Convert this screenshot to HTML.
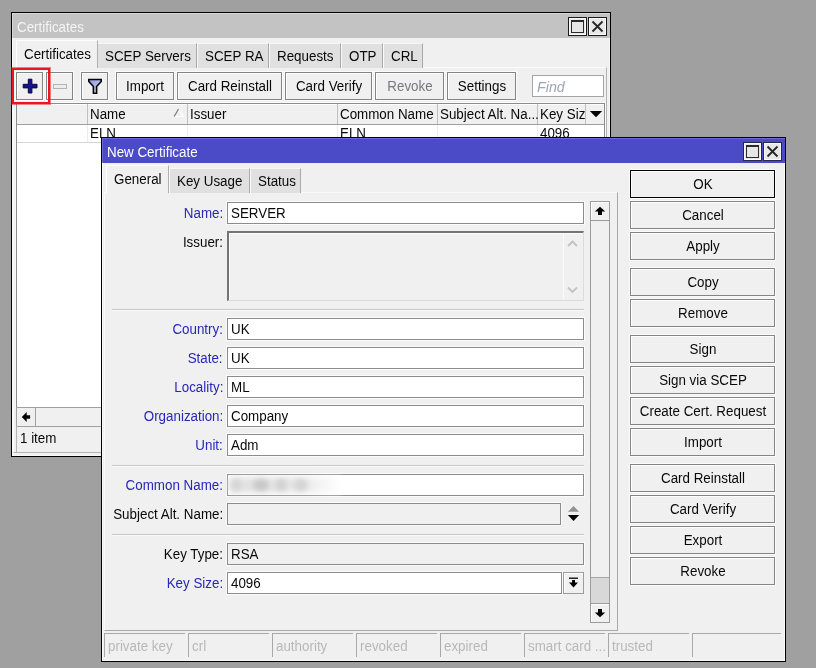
<!DOCTYPE html>
<html><head><meta charset="utf-8">
<style>
*{box-sizing:border-box;margin:0;padding:0}
html,body{width:816px;height:668px;overflow:hidden;background:#a0a0a0;font-family:"Liberation Sans",sans-serif;font-size:14px;color:#080808}
.a{position:absolute}
.t{position:absolute;white-space:nowrap;line-height:16px;display:block;transform:scaleX(0.955);transform-origin:0 0}
.tr{transform-origin:100% 0}
.tc{text-align:center;transform-origin:50% 0}
</style></head><body>
<div class="a" style="left:11px;top:12px;width:600px;height:445px;border:1px solid #000;background:#f0f0f0"></div>
<div class="a" style="left:12px;top:13px;width:598px;height:443px;border:1px solid #fafafa;border-right-color:#f8f8f8;border-bottom-color:#f8f8f8"></div>
<div class="a" style="left:12px;top:13px;width:598px;height:25px;background:#c3c3c3;border-top:1px solid #d8d8d8;border-left:1px solid #d8d8d8"></div>
<span class="t" style="left:17px;top:19px;color:#f4f4f4;">Certificates</span>
<div class="a" style="left:568px;top:17px;width:19px;height:19px;border:1px solid #1a1a1a;background:#fafafa"></div>
<div class="a" style="left:570px;top:19px;width:15px;height:15px;background:#e8e8e8"></div>
<div class="a" style="left:571px;top:20px;width:13px;height:13px;border:1px solid #2a2a2a;border-top-width:2px;background:#e6e6e6"></div>
<div class="a" style="left:588px;top:17px;width:19px;height:19px;border:1px solid #1a1a1a;background:#fafafa"></div>
<div class="a" style="left:590px;top:19px;width:15px;height:15px;background:#e8e8e8"></div>
<svg class="a" style="left:588px;top:17px" width="19" height="19"><path d="M4.5 4.5L14.5 14.5M14.5 4.5L4.5 14.5" stroke="#262626" stroke-width="1.8"/></svg>
<div class="a" style="left:13px;top:67px;width:594px;height:386px;border:1px solid #fafafa;border-right-color:#b4b4b4;border-bottom-color:#b4b4b4"></div>
<div class="a" style="left:97px;top:43px;width:100px;height:25px;background:#e0e0e0;border-top:1px solid #f6f6f6;border-left:1px solid #fafafa;border-right:1px solid #a8a8a8"></div>
<span class="t" style="left:104.5px;top:48px;">SCEP Servers</span>
<div class="a" style="left:197px;top:43px;width:72px;height:25px;background:#e0e0e0;border-top:1px solid #f6f6f6;border-left:1px solid #fafafa;border-right:1px solid #a8a8a8"></div>
<span class="t" style="left:204.5px;top:48px;">SCEP RA</span>
<div class="a" style="left:269px;top:43px;width:72px;height:25px;background:#e0e0e0;border-top:1px solid #f6f6f6;border-left:1px solid #fafafa;border-right:1px solid #a8a8a8"></div>
<span class="t" style="left:276.5px;top:48px;">Requests</span>
<div class="a" style="left:341px;top:43px;width:42px;height:25px;background:#e0e0e0;border-top:1px solid #f6f6f6;border-left:1px solid #fafafa;border-right:1px solid #a8a8a8"></div>
<span class="t" style="left:348.5px;top:48px;">OTP</span>
<div class="a" style="left:383px;top:43px;width:40px;height:25px;background:#e0e0e0;border-top:1px solid #f6f6f6;border-left:1px solid #fafafa;border-right:1px solid #a8a8a8"></div>
<span class="t" style="left:390.5px;top:48px;">CRL</span>
<div class="a" style="left:16px;top:40px;width:82px;height:28px;background:#f0f0f0;border-top:1px solid #fdfdfd;border-left:1px solid #fdfdfd;border-right:1px solid #b0b0b0"></div>
<span class="t" style="left:24px;top:46px;">Certificates</span>
<div class="a" style="left:16px;top:72px;width:27px;height:28px;border:1px solid #848484;background:#f0f0f0;box-shadow:0 0 0 1px #fbfbfb,inset 1px 1px 0 #fff"></div>
<svg class="a" style="left:22px;top:78px" width="17" height="17"><path d="M6.3 1.2h3.6v5.1h5.1v3.6h-5.1v5.1h-3.6v-5.1h-5.1v-3.6h5.1z" fill="#14148c" stroke="#080840" stroke-width="1"/></svg>
<div class="a" style="left:46px;top:72px;width:27px;height:28px;border:1px solid #848484;background:#f0f0f0;box-shadow:0 0 0 1px #fbfbfb,inset 1px 1px 0 #fff"></div>
<div class="a" style="left:53px;top:84px;width:14px;height:5px;border:1px solid #b4b4b4;background:#ececec"></div>
<div class="a" style="left:81px;top:72px;width:27px;height:28px;border:1px solid #848484;background:#f0f0f0;box-shadow:0 0 0 1px #fbfbfb,inset 1px 1px 0 #fff"></div>
<svg class="a" style="left:87px;top:78px" width="16" height="17"><defs><linearGradient id="fg" x1="0" y1="0" x2="1" y2="1"><stop offset="0" stop-color="#8c94d8"/><stop offset="1" stop-color="#d8dcf4"/></linearGradient></defs><path d="M1.8 1.5h12.4v2l-4.6 5v6.7h-3.2v-6.7l-4.6-5z" fill="url(#fg)" stroke="#050505" stroke-width="1.6" stroke-linejoin="miter"/></svg>
<div class="a" style="left:116px;top:72px;width:58px;height:28px;border:1px solid #848484;background:#f0f0f0;box-shadow:0 0 0 1px #fbfbfb,inset 1px 1px 0 #fff"></div>
<span class="t tc" style="left:-5.0px;width:300px;top:78px;">Import</span>
<div class="a" style="left:177px;top:72px;width:105px;height:28px;border:1px solid #848484;background:#f0f0f0;box-shadow:0 0 0 1px #fbfbfb,inset 1px 1px 0 #fff"></div>
<span class="t tc" style="left:79.5px;width:300px;top:78px;">Card Reinstall</span>
<div class="a" style="left:285px;top:72px;width:87px;height:28px;border:1px solid #848484;background:#f0f0f0;box-shadow:0 0 0 1px #fbfbfb,inset 1px 1px 0 #fff"></div>
<span class="t tc" style="left:178.5px;width:300px;top:78px;">Card Verify</span>
<div class="a" style="left:375px;top:72px;width:69px;height:28px;border:1px solid #848484;background:#f0f0f0;box-shadow:0 0 0 1px #fbfbfb,inset 1px 1px 0 #fff"></div>
<span class="t tc" style="left:259.5px;width:300px;top:78px;color:#78787c;">Revoke</span>
<div class="a" style="left:447px;top:72px;width:69px;height:28px;border:1px solid #848484;background:#f0f0f0;box-shadow:0 0 0 1px #fbfbfb,inset 1px 1px 0 #fff"></div>
<span class="t tc" style="left:331.5px;width:300px;top:78px;">Settings</span>
<div class="a" style="left:532px;top:75px;width:72px;height:22px;border:1px solid #a5a5a5;background:#fff"></div>
<span class="t" style="left:537px;top:79px;color:#9ea4b4;font-style:italic;transform:scaleX(1.02)">Find</span>
<div class="a" style="left:16px;top:103px;width:589px;height:305px;background:#fff;border:1px solid #8c8c8c;box-shadow:0 0 0 1px #fbfbfb"></div>
<div class="a" style="left:17px;top:104px;width:587px;height:21px;background:#f0f0f0;border-bottom:1px solid #a0a0a0;border-top:1px solid #fff"></div>
<div class="a" style="left:87px;top:104px;width:1px;height:20px;background:#c0c0c0"></div>
<div class="a" style="left:187px;top:104px;width:1px;height:20px;background:#c0c0c0"></div>
<div class="a" style="left:337px;top:104px;width:1px;height:20px;background:#c0c0c0"></div>
<div class="a" style="left:437px;top:104px;width:1px;height:20px;background:#c0c0c0"></div>
<div class="a" style="left:537px;top:104px;width:1px;height:20px;background:#c0c0c0"></div>
<div class="a" style="left:585px;top:104px;width:1px;height:20px;background:#c0c0c0"></div>
<span class="t" style="left:90px;top:106px;">Name</span>
<svg class="a" style="left:172px;top:107px" width="14" height="12"><path d="M6.5 2L11.5 9.5H2" fill="none" stroke="#fff" stroke-width="1.2"/><path d="M6.5 2L2.2 9.5" fill="none" stroke="#7a7a7a" stroke-width="1.2"/></svg>
<span class="t" style="left:190px;top:106px;">Issuer</span>
<span class="t" style="left:340px;top:106px;">Common Name</span>
<span class="t" style="left:440px;top:106px;">Subject Alt. Na...</span>
<span class="t" style="left:540px;top:106px;">Key Siz</span>
<svg class="a" style="left:589px;top:110px" width="15" height="10"><path d="M0.8 1H13.2L7 7.3Z" fill="#000"/></svg>
<div class="a" style="left:17px;top:142px;width:587px;height:1px;background:#d4d4d4"></div>
<div class="a" style="left:87px;top:125px;width:1px;height:17px;background:#ececec"></div>
<div class="a" style="left:187px;top:125px;width:1px;height:17px;background:#ececec"></div>
<div class="a" style="left:337px;top:125px;width:1px;height:17px;background:#ececec"></div>
<div class="a" style="left:437px;top:125px;width:1px;height:17px;background:#ececec"></div>
<div class="a" style="left:537px;top:125px;width:1px;height:17px;background:#ececec"></div>
<span class="t" style="left:90px;top:125px;">ELN</span>
<span class="t" style="left:340px;top:125px;">ELN</span>
<span class="t" style="left:540px;top:125px;">4096</span>
<div class="a" style="left:16px;top:407px;width:589px;height:20px;background:#f0f0f0;border:1px solid #a0a0a0"></div>
<div class="a" style="left:17px;top:408px;width:19px;height:18px;background:#f0f0f0;border-right:1px solid #a0a0a0"></div>
<svg class="a" style="left:18px;top:409px" width="16" height="16"><path d="M3.8 8L8.7 3V6.2H12.1V9.7H8.7V13Z" fill="#000"/></svg>
<div class="a" style="left:16px;top:426px;width:589px;height:27px;border-left:1px solid #b4b4b4;border-bottom:1px solid #b4b4b4"></div>
<span class="t" style="left:20px;top:430px;">1 item</span>
<div class="a" style="left:101px;top:137px;width:685px;height:525px;border:1px solid #000;background:#f0f0f0"></div>
<div class="a" style="left:102px;top:138px;width:683px;height:523px;border:1px solid #fafafa"></div>
<div class="a" style="left:102px;top:138px;width:683px;height:25px;background:#4b4bc8;border-top:1px solid #6a6ad8;border-left:1px solid #6a6ad8"></div>
<span class="t" style="left:107px;top:144px;color:#fff;">New Certificate</span>
<div class="a" style="left:743px;top:142px;width:19px;height:19px;border:1px solid #262650;background:#fafafa"></div>
<div class="a" style="left:745px;top:144px;width:15px;height:15px;background:#e8e8e8"></div>
<div class="a" style="left:746px;top:145px;width:13px;height:13px;border:1px solid #2a2a2a;border-top-width:2px;background:#e6e6e6"></div>
<div class="a" style="left:763px;top:142px;width:19px;height:19px;border:1px solid #262650;background:#fafafa"></div>
<div class="a" style="left:765px;top:144px;width:15px;height:15px;background:#e8e8e8"></div>
<svg class="a" style="left:763px;top:142px" width="19" height="19"><path d="M4.5 4.5L14.5 14.5M14.5 4.5L4.5 14.5" stroke="#262626" stroke-width="1.8"/></svg>
<div class="a" style="left:104px;top:192px;width:514px;height:439px;border:1px solid #fafafa;border-right-color:#a8a8a8;border-bottom-color:#a8a8a8"></div>
<div class="a" style="left:169px;top:168px;width:81px;height:25px;background:#e0e0e0;border-top:1px solid #f6f6f6;border-left:1px solid #fafafa;border-right:1px solid #a8a8a8"></div>
<span class="t" style="left:176.5px;top:173px;">Key Usage</span>
<div class="a" style="left:250px;top:168px;width:51px;height:25px;background:#e0e0e0;border-top:1px solid #f6f6f6;border-left:1px solid #fafafa;border-right:1px solid #a8a8a8"></div>
<span class="t" style="left:257.5px;top:173px;">Status</span>
<div class="a" style="left:106px;top:165px;width:63px;height:28px;background:#f0f0f0;border-top:1px solid #fdfdfd;border-left:1px solid #fdfdfd;border-right:1px solid #b0b0b0"></div>
<span class="t" style="left:114px;top:171px;">General</span>
<span class="t tr" style="right:593px;top:205px;color:#2727b8;">Name:</span>
<div class="a" style="left:227px;top:202px;width:357px;height:22px;border:1px solid #8c8c8c;background:#fff;box-shadow:0 0 0 1px #fbfbfb"></div>
<span class="t" style="left:231px;top:205px;">SERVER</span>
<span class="t tr" style="right:593px;top:234px;">Issuer:</span>
<div class="a" style="left:227px;top:231px;width:357px;height:70px;background:#f0f0f0;border:2px solid #747474;border-right:1px solid #dcdcdc;border-bottom:1px solid #dcdcdc;box-shadow:inset 1px 1px 0 #fcfcfc"></div>
<div class="a" style="left:563px;top:233px;width:1px;height:67px;background:#fafafa"></div>
<svg class="a" style="left:564px;top:236px" width="18" height="60"><path d="M4 10L8.5 5.6L13 10M4 51.5L8.5 55.9L13 51.5" fill="none" stroke="#c2c2c2" stroke-width="1.9"/></svg>
<div class="a" style="left:112px;top:309px;width:472px;height:1px;background:#c8c8c8"></div>
<div class="a" style="left:112px;top:310px;width:472px;height:1px;background:#fafafa"></div>
<span class="t tr" style="right:593px;top:321px;color:#2727b8;">Country:</span>
<div class="a" style="left:227px;top:318px;width:357px;height:22px;border:1px solid #8c8c8c;background:#fff;box-shadow:0 0 0 1px #fbfbfb"></div>
<span class="t" style="left:231px;top:321px;">UK</span>
<span class="t tr" style="right:593px;top:350px;color:#2727b8;">State:</span>
<div class="a" style="left:227px;top:347px;width:357px;height:22px;border:1px solid #8c8c8c;background:#fff;box-shadow:0 0 0 1px #fbfbfb"></div>
<span class="t" style="left:231px;top:350px;">UK</span>
<span class="t tr" style="right:593px;top:379px;color:#2727b8;">Locality:</span>
<div class="a" style="left:227px;top:376px;width:357px;height:22px;border:1px solid #8c8c8c;background:#fff;box-shadow:0 0 0 1px #fbfbfb"></div>
<span class="t" style="left:231px;top:379px;">ML</span>
<span class="t tr" style="right:593px;top:408px;color:#2727b8;">Organization:</span>
<div class="a" style="left:227px;top:405px;width:357px;height:22px;border:1px solid #8c8c8c;background:#fff;box-shadow:0 0 0 1px #fbfbfb"></div>
<span class="t" style="left:231px;top:408px;">Company</span>
<span class="t tr" style="right:593px;top:437px;color:#2727b8;">Unit:</span>
<div class="a" style="left:227px;top:434px;width:357px;height:22px;border:1px solid #8c8c8c;background:#fff;box-shadow:0 0 0 1px #fbfbfb"></div>
<span class="t" style="left:231px;top:437px;">Adm</span>
<div class="a" style="left:112px;top:465px;width:472px;height:1px;background:#c8c8c8"></div>
<div class="a" style="left:112px;top:466px;width:472px;height:1px;background:#fafafa"></div>
<span class="t tr" style="right:593px;top:477px;color:#2727b8;">Common Name:</span>
<div class="a" style="left:227px;top:474px;width:357px;height:22px;border:1px solid #8c8c8c;background:#fff;box-shadow:0 0 0 1px #fbfbfb"></div>
<div class="a" style="left:229px;top:477px;width:112px;height:16px;filter:blur(3px);background:linear-gradient(90deg,#e2e2e2,#e6e6e6 60%,#fff)"></div>
<div class="a" style="left:231px;top:479px;width:11px;height:12px;border-radius:50%;filter:blur(2.5px);background:#d6d6d6"></div>
<div class="a" style="left:253px;top:479px;width:16px;height:12px;border-radius:50%;filter:blur(2.5px);background:#c8c8c8"></div>
<div class="a" style="left:275px;top:479px;width:12px;height:12px;border-radius:50%;filter:blur(2.5px);background:#d2d2d2"></div>
<div class="a" style="left:294px;top:479px;width:14px;height:12px;border-radius:50%;filter:blur(2.5px);background:#d4d4d4"></div>
<span class="t tr" style="right:593px;top:506px;">Subject Alt. Name:</span>
<div class="a" style="left:227px;top:503px;width:334px;height:22px;border:1px solid #8c8c8c;background:#f0f0f0;box-shadow:0 0 0 1px #fbfbfb"></div>
<svg class="a" style="left:565px;top:505px" width="16" height="18"><path d="M3 6.7L8.5 0.9L14 6.7Z" fill="#929292"/><path d="M2.9 9.9H14.1L8.5 15.9Z" fill="#000"/></svg>
<div class="a" style="left:112px;top:534px;width:472px;height:1px;background:#c8c8c8"></div>
<div class="a" style="left:112px;top:535px;width:472px;height:1px;background:#fafafa"></div>
<span class="t tr" style="right:593px;top:546px;">Key Type:</span>
<div class="a" style="left:227px;top:543px;width:357px;height:22px;border:1px solid #8c8c8c;background:#f0f0f0;box-shadow:0 0 0 1px #fbfbfb"></div>
<span class="t" style="left:231px;top:546px;">RSA</span>
<span class="t tr" style="right:593px;top:575px;color:#2727b8;">Key Size:</span>
<div class="a" style="left:227px;top:572px;width:335px;height:22px;border:1px solid #8c8c8c;background:#fff;box-shadow:0 0 0 1px #fbfbfb"></div>
<span class="t" style="left:231px;top:575px;">4096</span>
<div class="a" style="left:563px;top:572px;width:21px;height:22px;border:1px solid #9c9c9c;background:#f0f0f0;box-shadow:inset 1px 1px 0 #fff"></div>
<svg class="a" style="left:565px;top:574px" width="16" height="16"><path d="M4 4.2h9" stroke="#000" stroke-width="1.3"/><path d="M7.2 6h2.8v2.6h3l-4.5 5-4.5-5h3z" fill="#000"/></svg>
<div class="a" style="left:590px;top:201px;width:20px;height:422px;background:#f0f0f0;border:1px solid #9c9c9c"></div>
<div class="a" style="left:590px;top:201px;width:20px;height:20px;border:1px solid #9c9c9c;background:#f0f0f0;box-shadow:inset 1px 1px 0 #fff"></div>
<svg class="a" style="left:592px;top:203px" width="16" height="16"><path d="M8 3.8L13.2 8.6H10V12H6V8.6H2.8Z" fill="#000"/></svg>
<div class="a" style="left:591px;top:577px;width:18px;height:26px;background:#d8d8d8;border-top:1px solid #a8a8a8"></div>
<div class="a" style="left:590px;top:603px;width:20px;height:20px;border:1px solid #9c9c9c;background:#f0f0f0;box-shadow:inset 1px 1px 0 #fff"></div>
<svg class="a" style="left:592px;top:605px" width="16" height="16"><path d="M8 12.2L13.2 7.4H10V4H6V7.4H2.8Z" fill="#000"/></svg>
<div class="a" style="left:630px;top:170px;width:145px;height:28px;border:1px solid #000;background:#f0f0f0;box-shadow:0 0 0 1px #fbfbfb,inset 1px 1px 0 #fff"></div>
<span class="t tc" style="left:552.5px;width:300px;top:176px;">OK</span>
<div class="a" style="left:630px;top:201px;width:145px;height:28px;border:1px solid #848484;background:#f0f0f0;box-shadow:0 0 0 1px #fbfbfb,inset 1px 1px 0 #fff"></div>
<span class="t tc" style="left:552.5px;width:300px;top:207px;">Cancel</span>
<div class="a" style="left:630px;top:232px;width:145px;height:28px;border:1px solid #848484;background:#f0f0f0;box-shadow:0 0 0 1px #fbfbfb,inset 1px 1px 0 #fff"></div>
<span class="t tc" style="left:552.5px;width:300px;top:238px;">Apply</span>
<div class="a" style="left:630px;top:268px;width:145px;height:28px;border:1px solid #848484;background:#f0f0f0;box-shadow:0 0 0 1px #fbfbfb,inset 1px 1px 0 #fff"></div>
<span class="t tc" style="left:552.5px;width:300px;top:274px;">Copy</span>
<div class="a" style="left:630px;top:299px;width:145px;height:28px;border:1px solid #848484;background:#f0f0f0;box-shadow:0 0 0 1px #fbfbfb,inset 1px 1px 0 #fff"></div>
<span class="t tc" style="left:552.5px;width:300px;top:305px;">Remove</span>
<div class="a" style="left:630px;top:335px;width:145px;height:28px;border:1px solid #848484;background:#f0f0f0;box-shadow:0 0 0 1px #fbfbfb,inset 1px 1px 0 #fff"></div>
<span class="t tc" style="left:552.5px;width:300px;top:341px;">Sign</span>
<div class="a" style="left:630px;top:366px;width:145px;height:28px;border:1px solid #848484;background:#f0f0f0;box-shadow:0 0 0 1px #fbfbfb,inset 1px 1px 0 #fff"></div>
<span class="t tc" style="left:552.5px;width:300px;top:372px;">Sign via SCEP</span>
<div class="a" style="left:630px;top:397px;width:145px;height:28px;border:1px solid #848484;background:#f0f0f0;box-shadow:0 0 0 1px #fbfbfb,inset 1px 1px 0 #fff"></div>
<span class="t tc" style="left:552.5px;width:300px;top:403px;">Create Cert. Request</span>
<div class="a" style="left:630px;top:428px;width:145px;height:28px;border:1px solid #848484;background:#f0f0f0;box-shadow:0 0 0 1px #fbfbfb,inset 1px 1px 0 #fff"></div>
<span class="t tc" style="left:552.5px;width:300px;top:434px;">Import</span>
<div class="a" style="left:630px;top:464px;width:145px;height:28px;border:1px solid #848484;background:#f0f0f0;box-shadow:0 0 0 1px #fbfbfb,inset 1px 1px 0 #fff"></div>
<span class="t tc" style="left:552.5px;width:300px;top:470px;">Card Reinstall</span>
<div class="a" style="left:630px;top:495px;width:145px;height:28px;border:1px solid #848484;background:#f0f0f0;box-shadow:0 0 0 1px #fbfbfb,inset 1px 1px 0 #fff"></div>
<span class="t tc" style="left:552.5px;width:300px;top:501px;">Card Verify</span>
<div class="a" style="left:630px;top:526px;width:145px;height:28px;border:1px solid #848484;background:#f0f0f0;box-shadow:0 0 0 1px #fbfbfb,inset 1px 1px 0 #fff"></div>
<span class="t tc" style="left:552.5px;width:300px;top:532px;">Export</span>
<div class="a" style="left:630px;top:557px;width:145px;height:28px;border:1px solid #848484;background:#f0f0f0;box-shadow:0 0 0 1px #fbfbfb,inset 1px 1px 0 #fff"></div>
<span class="t tc" style="left:552.5px;width:300px;top:563px;">Revoke</span>
<div class="a" style="left:104px;top:633px;width:81px;height:24px;border-top:1px solid #a8a8a8;border-left:1px solid #a8a8a8"></div>
<span class="t" style="left:108px;top:638px;color:#b8b8b8;">private key</span>
<div class="a" style="left:188px;top:633px;width:81px;height:24px;border-top:1px solid #a8a8a8;border-left:1px solid #a8a8a8"></div>
<span class="t" style="left:192px;top:638px;color:#b8b8b8;">crl</span>
<div class="a" style="left:272px;top:633px;width:81px;height:24px;border-top:1px solid #a8a8a8;border-left:1px solid #a8a8a8"></div>
<span class="t" style="left:276px;top:638px;color:#b8b8b8;">authority</span>
<div class="a" style="left:356px;top:633px;width:81px;height:24px;border-top:1px solid #a8a8a8;border-left:1px solid #a8a8a8"></div>
<span class="t" style="left:360px;top:638px;color:#b8b8b8;">revoked</span>
<div class="a" style="left:440px;top:633px;width:81px;height:24px;border-top:1px solid #a8a8a8;border-left:1px solid #a8a8a8"></div>
<span class="t" style="left:444px;top:638px;color:#b8b8b8;">expired</span>
<div class="a" style="left:524px;top:633px;width:81px;height:24px;border-top:1px solid #a8a8a8;border-left:1px solid #a8a8a8"></div>
<span class="t" style="left:528px;top:638px;color:#b8b8b8;">smart card ...</span>
<div class="a" style="left:608px;top:633px;width:81px;height:24px;border-top:1px solid #a8a8a8;border-left:1px solid #a8a8a8"></div>
<span class="t" style="left:612px;top:638px;color:#b8b8b8;">trusted</span>
<div class="a" style="left:692px;top:633px;width:89px;height:24px;border-top:1px solid #a8a8a8;border-left:1px solid #a8a8a8"></div>
<div class="a" style="left:12px;top:68px;width:38px;height:36px;border:2px solid #e8161e;box-shadow:0 0 0 1px rgba(235,30,36,0.55)"></div>
</body></html>
